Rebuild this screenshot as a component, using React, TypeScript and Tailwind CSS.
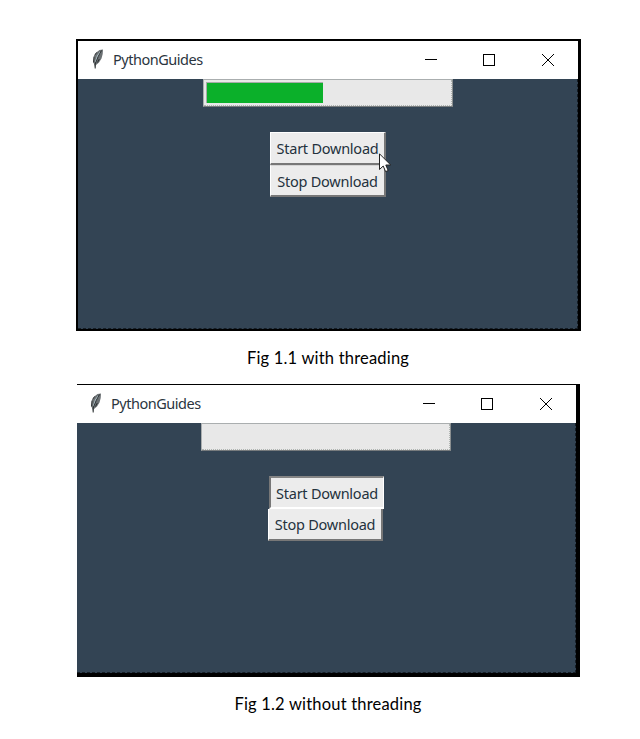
import React from "react";

function Feather() {
  return (
    <svg width="16" height="22" viewBox="0 0 16 22" className="shrink-0">
      <path d="M13 1.5 L9.5 2 L6.3 4.5 L4 8.5 L3.3 14 L4.3 17 L5 20 L6 17 L9 14.5 L11.5 10.5 L12.7 6 Z" fill="#6b7073" />
      <path d="M10.5 4 L7.5 8 L5.6 14" fill="none" stroke="#aebfc5" strokeWidth="1.4" />
      <path d="M11.5 2.5 L8.2 8.5 L5.2 16 L5.2 20.5 M4 8.5 L3.5 14.5 M6.5 4.5 L4.5 7.5 M9.3 11 L7.5 14.5" fill="none" stroke="#2c3032" strokeWidth="1" />
    </svg>
  );
}

function TitleBar({ second }: { second?: boolean }) {
  return (
    <div className={`flex h-[38px] w-full items-start bg-white ${second ? "pl-[11px]" : "pl-[12px]"}`}>
      <div className="pt-[7px]">
        <Feather />
      </div>
      <div className="ml-[7px] h-[38px] w-[100px] whitespace-nowrap text-[14.5px] leading-[36px] tracking-[-0.47px] text-[#2b353e]">
        PythonGuides
      </div>
      <svg
        width="132"
        height="14"
        viewBox="0 0 132 14"
        className="ml-[211px] mt-[12px]"
        shapeRendering="crispEdges"
        fill="none"
        stroke="#000"
      >
        <path d="M1 6.5H13" />
        <rect x="59.5" y="1.5" width="11" height="11" />
        <path d="M118 1L130 13M130 1L118 13" />
      </svg>
    </div>
  );
}

function Progress({ filled }: { filled?: boolean }) {
  return (
    <div className="h-[28px] w-[250px] border-l border-t border-b border-r border-l-[#aaaeaf] border-t-[#aaaeaf] border-b-[#777b7d] border-r-[#8b8f90] bg-[#e8e8e8]">
      <div className="h-full w-full border-b border-r border-dotted border-[#b0b5b2] pl-[2px] pt-[2px]">
        {filled && <div className="h-[21px] w-[117px] border-l border-t border-[#a6aca8] bg-[#0bb02a]" />}
      </div>
    </div>
  );
}

function Label({ children }: { children: string }) {
  return <span className="whitespace-nowrap pt-px text-[14.5px] leading-none tracking-[-0.24px] text-[#24323d]">{children}</span>;
}

function Pointer() {
  return (
    <svg width="13" height="20" viewBox="0 0 13 20" className="absolute left-[109px] top-[21px]">
      <path d="M0.5 0.8V16.5L4.2 13L6.6 18.6L9.2 17.5L6.8 12H11.7Z" fill="#fff" stroke="#222" />
    </svg>
  );
}

const face = "flex items-center justify-center bg-[#ececec]";

export default function App() {
  return (
    <main className="h-[739px] w-[640px] overflow-hidden bg-white pt-[39px] font-['Noto_Sans',sans-serif]">
      <section className="ml-[76px] w-[505px] border-b-2 border-l-2 border-r-[3px] border-t-2 border-black">
        <TitleBar />
        <div className="flex h-[250px] flex-col border-b border-r border-dashed border-[#151d25] bg-[#334454] pl-[125px]">
          <Progress filled />
          <div className="relative ml-[67px] mt-[25px] w-[116px]">
            <div className={`${face} h-[33px] border-b-2 border-l border-r-2 border-t border-b-[#777] border-l-white border-r-[#777] border-t-white`}>
              <Label>Start Download</Label>
            </div>
            <div className={`${face} h-[32px] border-b-2 border-l border-r-2 border-t border-b-[#777] border-l-white border-r-[#777] border-t-[#d5d5d5]`}>
              <Label>Stop Download</Label>
            </div>
            <Pointer />
          </div>
        </div>
      </section>
      <div className="ml-[16px] h-[53px] whitespace-nowrap text-center font-[Lato,sans-serif] text-[16.5px] leading-[55px] text-black">
        <span className="tracking-[0.19px]">Fig 1.1 with threading</span>
      </div>
      <section className="ml-[77px] w-[503px] border-b-4 border-r-4 border-t border-black">
        <TitleBar second />
        <div className="flex h-[250px] flex-col border-b border-r border-dashed border-[#151d25] bg-[#334454] pl-[124px]">
          <Progress />
          <div className="ml-[67px] mt-[25px] w-[116px]">
            <div className={`${face} ml-px h-[33px] w-[115px] border-b-2 border-l-2 border-r border-t-2 border-b-white border-l-[#777] border-r-white border-t-[#858585]`}>
              <Label>Start Download</Label>
            </div>
            <div className={`${face} h-[32px] w-[115px] border-b-2 border-l border-r-2 border-b-[#777] border-l-white border-r-[#777]`}>
              <Label>Stop Download</Label>
            </div>
          </div>
        </div>
      </section>
      <div className="ml-[16px] h-[53px] whitespace-nowrap text-center font-[Lato,sans-serif] text-[16.5px] leading-[55px] text-black">
        <span className="tracking-[0.19px]">Fig 1.2 without threading</span>
      </div>
    </main>
  );
}
